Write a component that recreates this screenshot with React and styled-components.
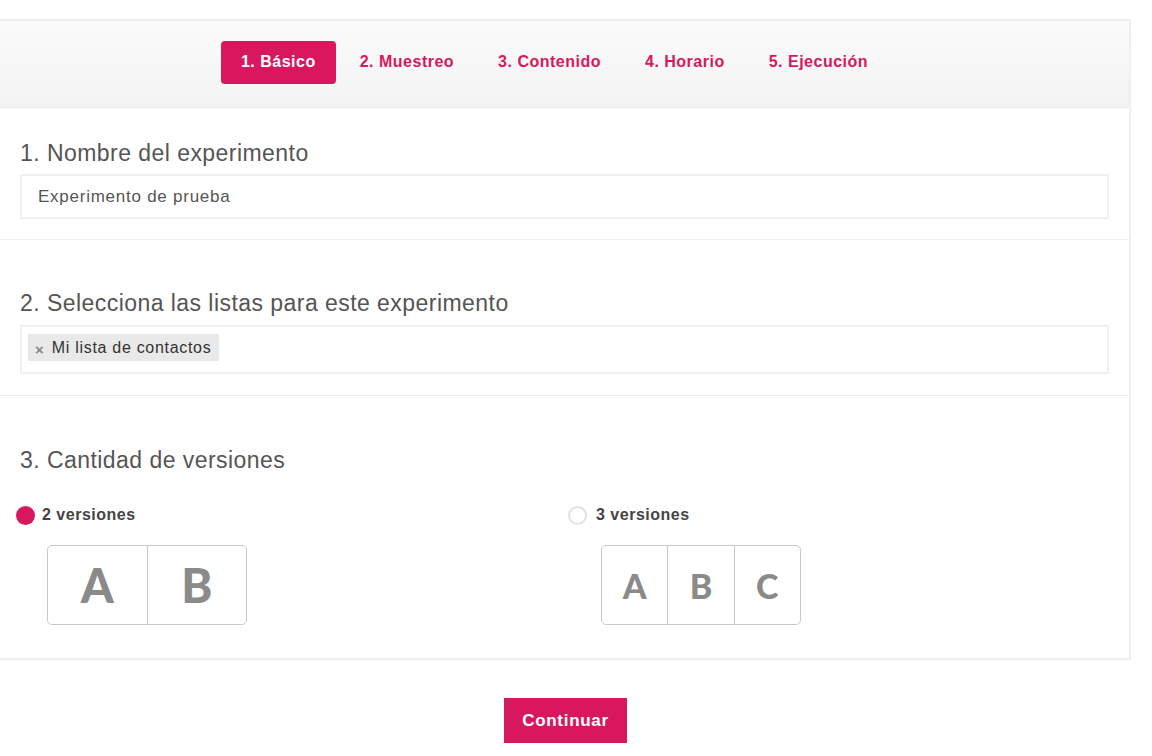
import React, { useState } from 'react';
import styled, { createGlobalStyle } from 'styled-components';

const GlobalStyle = createGlobalStyle`
  body {
    margin: 0;
    background: #fff;
    font-family: "Liberation Sans", Arial, sans-serif;
  }
`;

const pink = '#d9175f';

const Page = styled.div`
  padding-top: 19px;
  width: 1131px;
`;

const Panel = styled.div`
  border: 2px solid #efefef;
  border-left: 0;
`;

const StepBar = styled.div`
  box-sizing: border-box;
  height: 87px;
  padding: 0 20px 4px 0;
  display: flex;
  align-items: center;
  justify-content: center;
  gap: 4px;
  background: linear-gradient(to bottom, #fbfbfb, #f3f3f3);
  border-bottom: 1px solid #eaeaea;
`;

const Step = styled.button`
  border: 0;
  height: 43px;
  padding: 0 20px;
  border-radius: 4px;
  font-family: "Liberation Sans", Arial, sans-serif;
  font-size: 16px;
  letter-spacing: 0.5px;
  font-weight: 700;
  cursor: pointer;
  background: ${({ active }) => (active ? pink : 'transparent')};
  color: ${({ active }) => (active ? '#fff' : pink)};
`;

const Section = styled.div`
  padding: ${({ top }) => top}px 20px ${({ bottom }) => bottom}px;
  border-bottom: ${({ last }) => (last ? '0' : '1px solid #ececec')};
`;

const Title = styled.h2`
  margin: 0 0 ${({ gap }) => gap}px;
  font-size: 23px;
  letter-spacing: 0.45px;
  line-height: 26px;
  font-weight: 400;
  color: #555;
`;

const TextField = styled.div`
  height: 41px;
  border: 2px solid #f0f0f0;
  display: flex;
  align-items: center;
  padding: 0 16px;
  font-size: 17px;
  letter-spacing: 0.75px;
  color: #555;
`;

const TagField = styled.div`
  height: 49px;
  border: 2px solid #f0f0f0;
  padding: 7px 6px;
  box-sizing: border-box;
  display: flex;
  align-items: flex-start;
`;

const Tag = styled.span`
  display: inline-flex;
  align-items: center;
  gap: 8px;
  height: 27px;
  padding: 0 8px 0 7px;
  background: #e9e9e9;
  font-size: 16px;
  letter-spacing: 0.7px;
  color: #333;
`;

const TagX = styled.span`
  color: #888;
  font-size: 15px;
  font-weight: 700;
  margin-top: 3px;
  letter-spacing: 0;
`;

const Options = styled.div`
  display: grid;
  grid-template-columns: 552px 552px;
  margin-left: -4px;
`;

const Option = styled.label`
  display: flex;
  flex-direction: column;
  align-items: flex-start;
  cursor: pointer;
`;

const RadioRow = styled.div`
  display: flex;
  align-items: center;
  gap: ${({ checked }) => (checked ? 7 : 9)}px;
  height: 20px;
  font-size: 16px;
  letter-spacing: 0.5px;
  font-weight: 700;
  color: #444;
`;

const Dot = styled.span`
  width: 19px;
  height: 19px;
  border-radius: 50%;
  box-sizing: border-box;
  background: ${({ checked }) => (checked ? pink : '#fff')};
  border: ${({ checked }) => (checked ? '0' : '2px solid #e2e2e2')};
`;

const Versions = styled.div`
  margin: 20px 0 0 ${({ offset }) => offset}px;
  width: 200px;
  height: 80px;
  box-sizing: border-box;
  border: 1.5px solid #c8c8c8;
  border-radius: 5px;
  display: flex;
`;

const Letter = styled.span`
  flex: 1;
  display: flex;
  align-items: center;
  justify-content: center;
  font-family: Lato, "Open Sans", sans-serif;
  font-weight: 900;
  font-size: ${({ size }) => size}px;
  color: #8a8a8a;
  & + & {
    border-left: 1.5px solid #c8c8c8;
  }
`;

const Footer = styled.div`
  display: flex;
  justify-content: center;
  padding: 38px 0 12px;
`;

const Continue = styled.button`
  border: 0;
  width: 123px;
  height: 45px;
  background: ${pink};
  color: #fff;
  font-family: "Liberation Sans", Arial, sans-serif;
  font-size: 17px;
  letter-spacing: 0.7px;
  font-weight: 700;
  cursor: pointer;
`;

const steps = ['1. Básico', '2. Muestreo', '3. Contenido', '4. Horario', '5. Ejecución'];

const VersionOption = ({ count, checked, onPick, offset }) => {
  const letters = ['A', 'B', 'C'].slice(0, count);
  return (
    <Option onClick={onPick}>
      <RadioRow checked={checked}>
        <Dot checked={checked} />
        {count} versiones
      </RadioRow>
      <Versions offset={offset}>
        {letters.map((l) => (
          <Letter key={l} size={count === 2 ? 47 : 34}>{l}</Letter>
        ))}
      </Versions>
    </Option>
  );
};

export default function App() {
  const [versions, setVersions] = useState(2);
  return (
    <Page>
      <GlobalStyle />
      <Panel>
        <StepBar>
          {steps.map((s, i) => (
            <Step key={s} active={i === 0}>{s}</Step>
          ))}
        </StepBar>
        <Section top={32} bottom={20}>
          <Title gap={8}>1. Nombre del experimento</Title>
          <TextField>Experimento de prueba</TextField>
        </Section>
        <Section top={50} bottom={21}>
          <Title gap={9}>2. Selecciona las listas para este experimento</Title>
          <TagField>
            <Tag>
              <TagX>×</TagX>
              Mi lista de contactos
            </Tag>
          </TagField>
        </Section>
        <Section top={51} bottom={33} last>
          <Title gap={32}>3. Cantidad de versiones</Title>
          <Options>
            <VersionOption count={2} checked={versions === 2} onPick={() => setVersions(2)} offset={31} />
            <VersionOption count={3} checked={versions === 3} onPick={() => setVersions(3)} offset={33} />
          </Options>
        </Section>
      </Panel>
      <Footer>
        <Continue>Continuar</Continue>
      </Footer>
    </Page>
  );
}
